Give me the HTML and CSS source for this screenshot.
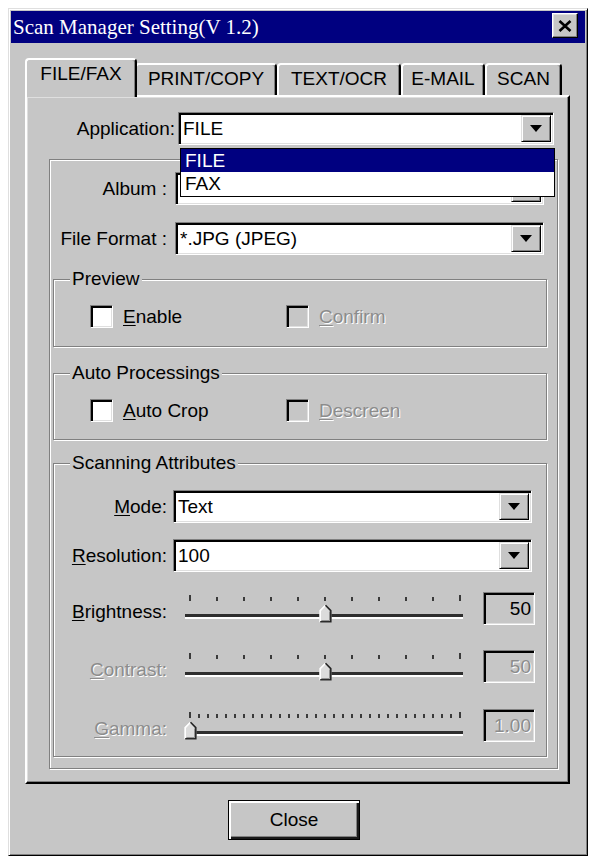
FILE: index.html
```html
<!DOCTYPE html>
<html>
<head>
<meta charset="utf-8">
<title>Scan Manager Setting</title>
<link rel="stylesheet" href="styles.css">
</head>
<body>
<div class="window">
  <div class="titlebar">
    <span class="title">Scan Manager Setting(V 1.2)</span>
    <div class="xbtn">
      <svg width="14" height="12" viewBox="0 0 14 12"><path d="M1.5 1 L12.5 11 M12.5 1 L1.5 11" stroke="#000" stroke-width="2.6" fill="none"/></svg>
    </div>
  </div>
  <div class="tabs">
    <div class="tab sel t1">FILE/FAX</div>
    <div class="tab t2">PRINT/COPY</div>
    <div class="tab t3">TEXT/OCR</div>
    <div class="tab t4">E-MAIL</div>
    <div class="tab t5">SCAN</div>
  </div>
  <div class="panel">
    <div class="app-row">
      <span class="app-lbl">Application:</span>
      <div class="combo app-combo">
        <span class="ctext">FILE</span>
        <span class="dbtn"><i class="tri"></i></span>
      </div>
      <div class="dropdown">
        <div class="opt hl">FILE</div>
        <div class="opt">FAX</div>
      </div>
    </div>
    <div class="group">
      <div class="frow">
        <span class="flbl">Album :</span>
        <div class="combo fcombo">
          <span class="ctext"></span>
          <span class="dbtn"><i class="tri"></i></span>
        </div>
      </div>
      <div class="frow">
        <span class="flbl">File Format :</span>
        <div class="combo fcombo">
          <span class="ctext">*.JPG (JPEG)</span>
          <span class="dbtn"><i class="tri"></i></span>
        </div>
      </div>
      <div class="fs fs-preview">
        <div class="legend">Preview</div>
        <div class="cbrow">
          <div class="cb"><span class="box"></span><span><u>E</u>nable</span></div>
          <div class="cb"><span class="box off"></span><span class="dis"><u>C</u>onfirm</span></div>
        </div>
      </div>
      <div class="fs fs-auto">
        <div class="legend">Auto Processings</div>
        <div class="cbrow">
          <div class="cb"><span class="box"></span><span><u>A</u>uto Crop</span></div>
          <div class="cb"><span class="box off"></span><span class="dis"><u>D</u>escreen</span></div>
        </div>
      </div>
      <div class="fs fs-scan">
        <div class="legend">Scanning Attributes</div>
        <div class="srow r-mode">
          <span class="slbl"><u>M</u>ode:</span>
          <div class="combo scombo">
            <span class="ctext">Text</span>
            <span class="dbtn"><i class="tri"></i></span>
          </div>
        </div>
        <div class="srow r-res">
          <span class="slbl"><u>R</u>esolution:</span>
          <div class="combo scombo">
            <span class="ctext">100</span>
            <span class="dbtn"><i class="tri"></i></span>
          </div>
        </div>
        <div class="srow r-bri">
          <span class="slbl sl-lbl"><u>B</u>rightness:</span>
          <div class="slcell">
            <div class="slider">
              <div class="ticks">
                <i class="tk end"></i><i class="tk"></i><i class="tk"></i><i class="tk"></i><i class="tk"></i><i class="tk"></i><i class="tk"></i><i class="tk"></i><i class="tk"></i><i class="tk"></i><i class="tk end"></i>
              </div>
              <div class="track"></div>
              <svg class="thumb" style="left:134px" width="13" height="19" viewBox="0 0 13 19">
                <path d="M0.5 18.5 V6.5 L6.5 0.5 L12.5 6.5 V18.5 Z" fill="#dcdcdc"/>
                <path d="M1.2 18 V6.6 L6.5 1.2" fill="none" stroke="#fff" stroke-width="1.6"/>
                <path d="M6.5 1.2 L11.8 6.6 V17.8 H1.2" fill="none" stroke="#222" stroke-width="1.6"/>
                <path d="M10.6 7.4 V16.6 H2.4" fill="none" stroke="#8a8a8a" stroke-width="1"/>
              </svg>
            </div>
            <div class="vbox">50</div>
          </div>
        </div>
        <div class="srow r-con">
          <span class="slbl sl-lbl dis"><u>C</u>ontrast:</span>
          <div class="slcell">
            <div class="slider">
              <div class="ticks">
                <i class="tk end"></i><i class="tk"></i><i class="tk"></i><i class="tk"></i><i class="tk"></i><i class="tk"></i><i class="tk"></i><i class="tk"></i><i class="tk"></i><i class="tk"></i><i class="tk end"></i>
              </div>
              <div class="track"></div>
              <svg class="thumb" style="left:134px" width="13" height="19" viewBox="0 0 13 19">
                <path d="M0.5 18.5 V6.5 L6.5 0.5 L12.5 6.5 V18.5 Z" fill="#dcdcdc"/>
                <path d="M1.2 18 V6.6 L6.5 1.2" fill="none" stroke="#fff" stroke-width="1.6"/>
                <path d="M6.5 1.2 L11.8 6.6 V17.8 H1.2" fill="none" stroke="#222" stroke-width="1.6"/>
                <path d="M10.6 7.4 V16.6 H2.4" fill="none" stroke="#8a8a8a" stroke-width="1"/>
              </svg>
            </div>
            <div class="vbox dis">50</div>
          </div>
        </div>
        <div class="srow r-gam">
          <span class="slbl sl-lbl dis"><u>G</u>amma:</span>
          <div class="slcell">
            <div class="slider">
              <div class="ticks">
                <i class="tk end"></i><i class="tk"></i><i class="tk"></i><i class="tk"></i><i class="tk"></i><i class="tk"></i><i class="tk"></i><i class="tk"></i><i class="tk"></i><i class="tk"></i><i class="tk"></i><i class="tk"></i><i class="tk"></i><i class="tk"></i><i class="tk"></i><i class="tk"></i><i class="tk"></i><i class="tk"></i><i class="tk"></i><i class="tk"></i><i class="tk"></i><i class="tk"></i><i class="tk"></i><i class="tk"></i><i class="tk"></i><i class="tk"></i><i class="tk"></i><i class="tk"></i><i class="tk"></i><i class="tk"></i><i class="tk end"></i>
              </div>
              <div class="track"></div>
              <svg class="thumb" style="left:-1px" width="13" height="19" viewBox="0 0 13 19">
                <path d="M0.5 18.5 V6.5 L6.5 0.5 L12.5 6.5 V18.5 Z" fill="#dcdcdc"/>
                <path d="M1.2 18 V6.6 L6.5 1.2" fill="none" stroke="#fff" stroke-width="1.6"/>
                <path d="M6.5 1.2 L11.8 6.6 V17.8 H1.2" fill="none" stroke="#222" stroke-width="1.6"/>
                <path d="M10.6 7.4 V16.6 H2.4" fill="none" stroke="#8a8a8a" stroke-width="1"/>
              </svg>
            </div>
            <div class="vbox dis">1.00</div>
          </div>
        </div>
      </div>
    </div>
  </div>
  <div class="footer">
    <div class="close">Close</div>
  </div>
</div>
</body>
</html>
```
FILE: styles.css
```css
* { box-sizing: border-box; }

body {
  margin: 0;
  background: #fff;
  font-family: "Liberation Sans", Arial, sans-serif;
  font-size: 19px;
  color: #000;
}

u { text-decoration-thickness: 1px; text-underline-offset: 2px; }

.window {
  margin: 8px 0 0 8px;
  width: 580px;
  height: 848px;
  background: #c6c6c6;
  border: 1px solid;
  border-color: #dfdfdf #000 #000 #dfdfdf;
  box-shadow: inset 1px 1px 0 #fff, inset -1px -1px 0 #808080;
  padding: 2px;
}

.titlebar {
  height: 32px;
  background: #000080;
  display: flex;
  align-items: flex-start;
  justify-content: space-between;
}

.title {
  font-family: "Liberation Serif", "Times New Roman", serif;
  font-size: 21px;
  color: #fff;
  line-height: 32px;
  padding-left: 2px;
  white-space: nowrap;
}

.xbtn {
  width: 26px;
  height: 25px;
  margin: 2px 7px 0 0;
  background: #c6c6c6;
  border: 1px solid;
  border-color: #fff #000 #000 #fff;
  box-shadow: inset -1px -1px 0 #808080, inset 1px 1px 0 #dfdfdf;
  display: flex;
  align-items: center;
  justify-content: center;
}

/* tabs */
.tabs {
  display: flex;
  align-items: flex-end;
  height: 37px;
  margin: 15px 0 0 14px;
}

.tab {
  height: 32px;
  line-height: 28px;
  text-align: center;
  border-top: 2px solid #fff;
  border-left: 2px solid #fff;
  border-right: 2px solid #000;
  box-shadow: inset -1px 0 0 #808080;
  border-radius: 4px 4px 0 0;
  background: #c6c6c6;
  white-space: nowrap;
}

.tab.sel {
  height: 39px;
  margin-bottom: -2px;
  margin-right: -2px;
  position: relative;
  z-index: 2;
}

.t1 { width: 112px; }
.t2 { width: 142px; }
.t3 { width: 124px; }
.t4 { width: 84px; }
.t5 { width: 77px; }

/* panel */
.panel {
  margin-left: 14px;
  width: 545px;
  height: 689px;
  border: 2px solid;
  border-color: #fff #000 #000 #fff;
  box-shadow: inset -1px -1px 0 #808080, inset 1px 1px 0 #dfdfdf;
}

.app-row {
  position: relative;
  display: flex;
  margin-top: 15px;
}

.app-lbl {
  width: 148px;
  text-align: right;
  line-height: 33px;
  margin-right: 3px;
}

.app-combo { width: 376px; }

/* combo box */
.combo {
  height: 33px;
  display: flex;
  align-items: flex-start;
  background: #fff;
  border: 1px solid;
  border-color: #808080 #fff #fff #808080;
  box-shadow: inset 2px 2px 0 #000, inset -1px -1px 0 #dfdfdf;
  padding: 2px 2px 2px 4px;
}

.ctext {
  flex: 1;
  line-height: 28px;
  white-space: nowrap;
  overflow: hidden;
}

.dbtn {
  width: 30px;
  height: 27px;
  background: #c6c6c6;
  border: 1px solid;
  border-color: #dfdfdf #000 #000 #dfdfdf;
  box-shadow: inset 1px 1px 0 #fff, inset -1px -1px 0 #808080;
  display: flex;
  align-items: center;
  justify-content: center;
}

.tri {
  width: 0;
  height: 0;
  border-left: 6px solid transparent;
  border-right: 6px solid transparent;
  border-top: 7px solid #000;
}

.dropdown {
  position: absolute;
  left: 153px;
  top: 36px;
  width: 375px;
  background: #fff;
  border: 1px solid #000;
  z-index: 3;
}

.opt {
  height: 24px;
  line-height: 24px;
  padding-left: 4px;
}

.opt.hl {
  height: 23px;
  line-height: 23px;
  background: #000080;
  color: #fff;
}

/* outer group */
.group {
  margin: 14px 0 0 22px;
  width: 509px;
  height: 610px;
  border: 1px solid #808080;
  box-shadow: inset 1px 1px 0 #fff, 1px 1px 0 #fff;
}

.frow {
  display: flex;
  margin-top: 12px;
}

.frow + .frow { margin-top: 17px; }

.flbl {
  width: 117px;
  margin-right: 8px;
  text-align: right;
  line-height: 33px;
  white-space: nowrap;
}

.fcombo { width: 369px; }

/* fieldsets */
.fs {
  margin: 24px 0 0 3px;
  width: 494px;
  border: 1px solid #808080;
  box-shadow: inset 1px 1px 0 #fff, 1px 1px 0 #fff;
}

.fs-preview { height: 68px; }
.fs-auto { height: 67px; margin-top: 26px; }
.fs-scan { height: 294px; margin-top: 23px; }

.legend {
  width: fit-content;
  margin: -12px 0 0 16px;
  padding: 0 2px;
  line-height: 22px;
  background: #c6c6c6;
  white-space: nowrap;
}

.cbrow {
  display: grid;
  grid-template-columns: 196px auto;
  margin-top: 15px;
  padding-left: 36px;
}

.cb {
  display: flex;
  align-items: center;
  gap: 10px;
  line-height: 23px;
  white-space: nowrap;
}

.box {
  width: 23px;
  height: 23px;
  background: #fff;
  border: 1px solid;
  border-color: #808080 #fff #fff #808080;
  box-shadow: inset 2px 2px 0 #000, inset -1px -1px 0 #dfdfdf;
}

.box.off { background: #c6c6c6; }

.dis {
  color: #8c8c8c;
  text-shadow: 1px 1px 0 #fff;
}

/* scanning rows */
.srow {
  display: grid;
  grid-template-columns: 113px auto;
  column-gap: 6px;
}

.slbl {
  text-align: right;
  line-height: 33px;
  white-space: nowrap;
}

.sl-lbl {
  padding-top: 9px;
  line-height: 22px;
}

.scombo { width: 359px; }

.r-mode { margin-top: 16px; }
.r-res { margin-top: 16px; }
.r-bri { margin-top: 20px; }
.r-con { margin-top: 25px; }
.r-gam { margin-top: 26px; }

.slcell {
  display: flex;
  padding-left: 12px;
  gap: 20px;
}

.slider {
  position: relative;
  width: 278px;
  height: 33px;
}

.ticks {
  display: flex;
  justify-content: space-between;
  align-items: flex-end;
  padding: 0 2px 0 4px;
  margin-top: 3px;
  height: 6px;
}

.tk {
  display: block;
  width: 2px;
  height: 4px;
  background: #3a3a3a;
}

.tk.end { height: 6px; }

.track {
  margin-top: 13px;
  height: 5px;
  border-top: 3px solid #2e2e2e;
  border-bottom: 2px solid #fff;
}

.thumb {
  position: absolute;
  top: 12px;
}

.vbox {
  width: 52px;
  height: 33px;
  border: 1px solid;
  border-color: #808080 #fff #fff #808080;
  box-shadow: inset 2px 2px 0 #000, inset -1px -1px 0 #dfdfdf;
  text-align: right;
  padding-right: 3px;
  line-height: 31px;
}

/* footer */
.footer {
  margin-top: 16px;
  padding-left: 217px;
}

.close {
  width: 132px;
  height: 40px;
  border: 1px solid #000;
  box-shadow: inset 2px 2px 0 #fff, inset -2px -2px 0 #1a1a1a, inset -3px -3px 0 #808080;
  text-align: center;
  line-height: 37px;
}
```
